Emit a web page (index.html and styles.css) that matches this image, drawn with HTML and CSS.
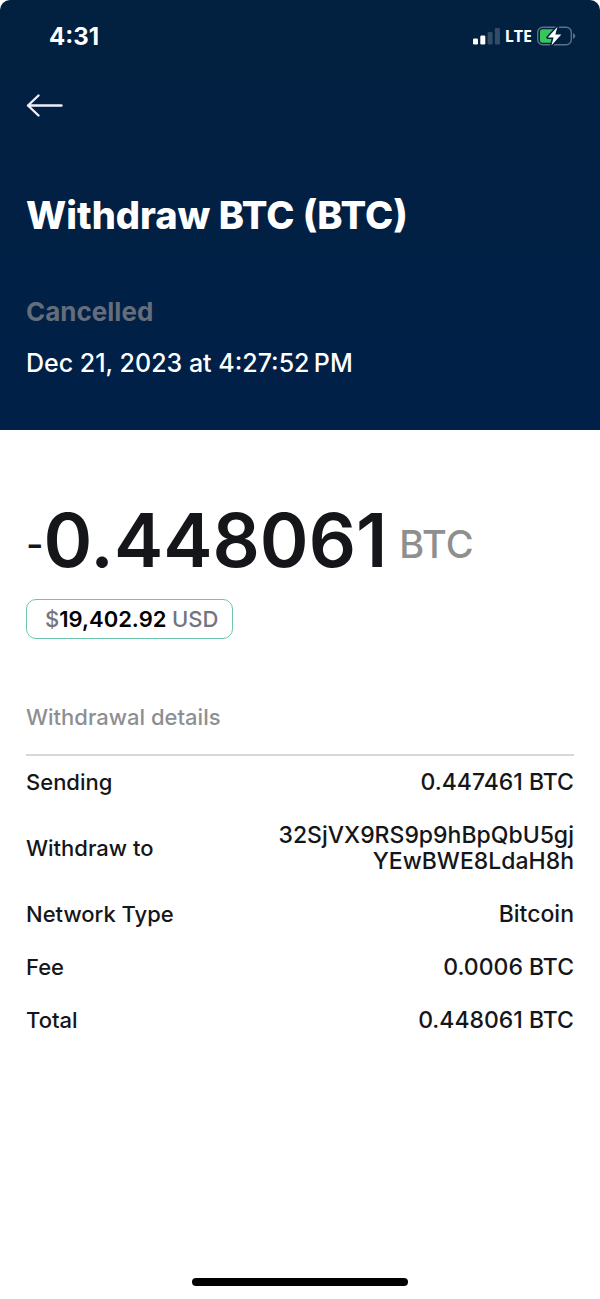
FILE: index.html
```
<!DOCTYPE html>
<html lang="en">
<head>
    <meta charset="UTF-8">
    <meta name="viewport" content="width=device-width, initial-scale=1.0">
    <title>Withdraw BTC</title>
    <link rel="stylesheet" href="styles.css">
</head>
<body>
    <div class="screen">
        <header class="header">
            <div class="status-bar">
                <span class="time">4:31</span>
                <div class="status-icons">
                    <svg class="signal" width="27" height="17" viewBox="0 0 27 17" fill="#fff" aria-hidden="true">
                        <rect x="0" y="10.5" width="5" height="6" rx="1.3"/>
                        <rect x="7.3" y="7.5" width="5" height="9" rx="1.3"/>
                        <rect x="14.6" y="4" width="5" height="12.5" rx="1.3" opacity=".2"/>
                        <rect x="21.9" y="0" width="5" height="16.5" rx="1.3" opacity=".2"/>
                    </svg>
                    <span class="network">LTE</span>
                    <svg class="battery" width="39" height="20" viewBox="0 0 39 20" aria-hidden="true">
                        <rect x=".7" y="1.2" width="33.6" height="17.6" rx="5" fill="none" stroke="#5d7088" stroke-width="1.4"/>
                        <path d="M36 7.2c1.6.6 2.3 1.6 2.3 2.8s-.7 2.2-2.3 2.8z" fill="#5d7088"/>
                        <path d="M5.5 3.3H17v13.4H5.5A2.5 2.5 0 0 1 3 14.2V5.8a2.5 2.5 0 0 1 2.5-2.5z" fill="#35c759"/>
                        <path d="M20.5.8 10.8 11.4h5.8l-2.2 8L24.3 8.6h-6z" fill="#fff" stroke="#02203f" stroke-width="3" stroke-linejoin="round" paint-order="stroke"/>
                    </svg>
                </div>
            </div>

            <button class="back-btn" type="button" aria-label="Back">
                <svg width="37" height="23" viewBox="0 0 37 23" fill="none" stroke="#eeedfa" stroke-width="2.4" stroke-linecap="round" stroke-linejoin="round">
                    <path d="M35.5 11.5H2M12.5 1.5 2 11.5l10.5 10"/>
                </svg>
            </button>

            <h1>Withdraw BTC (BTC)</h1>
            <p class="status">Cancelled</p>
            <p class="date">Dec 21, 2023 at 4:27:52&#8239;PM</p>
        </header>

        <main class="content">
            <div class="amount">
                <span class="sign">-</span>
                <span class="value">0.448061</span>
                <span class="currency">BTC</span>
            </div>
            <div class="fiat"><span>$</span>19,402.92 <span>USD</span></div>

            <h2>Withdrawal details</h2>
            <table class="details">
                <tr>
                    <th scope="row">Sending</th>
                    <td>0.447461 BTC</td>
                </tr>
                <tr>
                    <th scope="row">Withdraw to</th>
                    <td>32SjVX9RS9p9hBpQbU5gjYEwBWE8LdaH8h</td>
                </tr>
                <tr>
                    <th scope="row">Network Type</th>
                    <td>Bitcoin</td>
                </tr>
                <tr>
                    <th scope="row">Fee</th>
                    <td>0.0006 BTC</td>
                </tr>
                <tr>
                    <th scope="row">Total</th>
                    <td>0.448061 BTC</td>
                </tr>
            </table>
        </main>

        <div class="home-indicator"></div>
    </div>
</body>
</html>
```
FILE: styles.css
```
:root {
    --header-top: #02203f;
    --header-bottom: #002049;
    --text-color: #15161a;
    --text-secondary: #8e8f92;
    --border-color: #d6d7d9;
    --accent-color: #6fc5ae;
}

* {
    margin: 0;
    padding: 0;
    box-sizing: border-box;
}

body {
    font-family: Inter, "Liberation Sans", sans-serif;
    background-color: #fff;
    color: var(--text-color);
    -webkit-font-smoothing: antialiased;
}

.screen {
    min-height: 100vh;
    display: flex;
    flex-direction: column;
}

.header {
    background: linear-gradient(var(--header-top), var(--header-bottom));
    color: #fff;
    padding: 20px 24px 50px 26px;
    border-radius: 10px 10px 0 0;
}

.status-bar {
    display: flex;
    justify-content: space-between;
    align-items: center;
    height: 32px;
    padding-left: 23px;
}

.time {
    font-size: 24px;
    font-weight: 700;
}

.status-icons {
    display: flex;
    align-items: center;
    gap: 5px;
}

.network {
    font-family: "Open Sans", sans-serif;
    font-size: 16px;
    font-weight: 700;
}

.back-btn {
    display: flex;
    align-items: center;
    height: 44px;
    margin-top: 31px;
    background: none;
    border: none;
    cursor: pointer;
}

h1 {
    margin-top: 64px;
    font-size: 38px;
    font-weight: 800;
    line-height: 48px;
}

.status {
    margin-top: 56px;
    color: #646d7b;
    font-size: 26px;
    font-weight: 700;
    line-height: 34px;
}

.date {
    margin-top: 17px;
    font-size: 25px;
    font-weight: 500;
    line-height: 34px;
}

.content {
    flex: 1;
    padding: 64px 26px 32px;
}

.amount {
    display: flex;
    align-items: center;
    height: 92px;
}

.sign,
.currency {
    padding-top: 8px;
    font-size: 38px;
    font-weight: 500;
}

.value {
    font-size: 74px;
    font-weight: 600;
}

.currency {
    margin-left: 12px;
    color: #8f8f90;
}

.fiat {
    width: fit-content;
    margin-top: 13px;
    padding: 0 14px 0 18px;
    border: 1px solid var(--accent-color);
    border-radius: 10px;
    color: #000;
    font-size: 22px;
    font-weight: 600;
    line-height: 38px;
}

.fiat span {
    color: #74757c;
    font-weight: 500;
}

h2 {
    margin-top: 60px;
    padding-bottom: 19px;
    border-bottom: 2px solid var(--border-color);
    color: var(--text-secondary);
    font-size: 22px;
    font-weight: 500;
    line-height: 36px;
}

.details {
    width: 100%;
    table-layout: fixed;
    border-collapse: collapse;
    line-height: 26px;
}

.details th,
.details td {
    padding: 13px 0 14px;
    font-weight: 500;
    vertical-align: middle;
}

.details th {
    width: 46%;
    font-size: 22px;
    text-align: left;
}

.details td {
    font-size: 23px;
    text-align: right;
    word-break: break-all;
}

.home-indicator {
    width: 36%;
    height: 8px;
    margin: 0 auto 13px;
    border-radius: 4px;
    background-color: #000;
}
```
